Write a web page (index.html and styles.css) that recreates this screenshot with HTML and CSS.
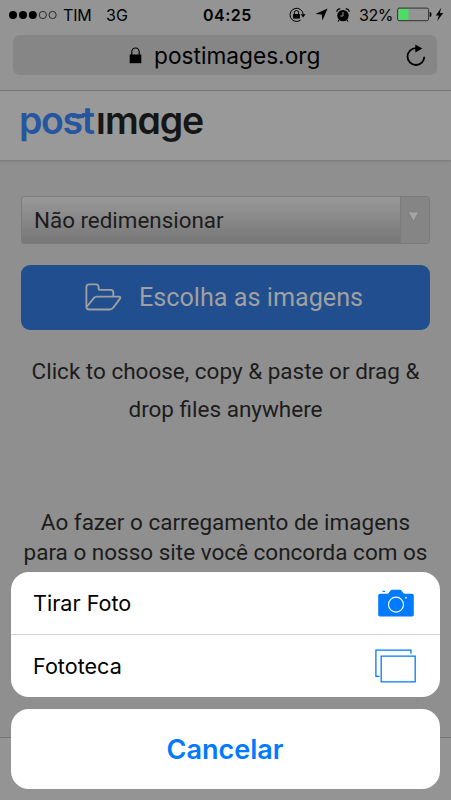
FILE: index.html
```html
<!DOCTYPE html>
<html lang="pt-BR">
<head>
<meta charset="utf-8">
<title>postimages.org</title>
<link rel="stylesheet" href="styles.css">
</head>
<body>
<div class="phone">
  <header class="browser">
    <div class="status">
      <svg class="signal" width="48" height="10" viewBox="0 0 48 10"><circle cx="4" cy="5" r="4"/><circle cx="14" cy="5" r="4"/><circle cx="23.8" cy="5" r="4"/><g fill="none" stroke="#111" stroke-width=".8"><circle cx="33.8" cy="5" r="3.6"/><circle cx="43.6" cy="5" r="3.6"/></g></svg>
      <span class="carrier">TIM</span>
      <span class="network">3G</span>
      <span class="clock">04:25</span>
      <svg class="rotation" width="17" height="16" viewBox="0 0 17 16"><path d="M11.5 13.2A6.6 6.6 0 1 1 14.2 7.5" fill="none" stroke="#000" stroke-width="1"/><path d="M11.6 7.2h5l-2.5 3.3z"/><path d="M4.1 7h6.8v4.6H4.1z"/><path d="M5.4 7.3V5.6a2.1 2.1 0 0 1 4.2 0v1.7" fill="none" stroke="#000" stroke-width="1"/></svg>
      <svg class="location" width="13" height="13" viewBox="0 0 13 13"><path d="M12.6.4L7.4 12.6 6.8 6.6.4 6z"/></svg>
      <svg class="alarm" width="14" height="14" viewBox="0 0 14 14"><circle cx="7" cy="7.6" r="5.7"/><path d="M.8 3.7A3 3 0 0 1 4.3.9M9.7.9a3 3 0 0 1 3.5 2.8" fill="none" stroke="#000" stroke-width="1.3"/><path d="M3 12l-1 1.5M11 12l1 1.5" stroke="#000" stroke-width="1.2"/><path d="M7 4v4H4.2" fill="none" stroke="#949494" stroke-width="1"/></svg>
      <span class="percent">32%</span>
      <svg class="battery" width="47" height="15" viewBox="0 0 47 15"><rect x=".6" y="1.1" width="31" height="12.6" rx="1.6" fill="none" stroke="#333" stroke-width="1"/><path d="M1.5 2h10v10.8h-10z" fill="#4bdc64"/><path d="M32.7 5c2.4 0 2.4 5 0 5z"/><path d="M44.3.8l-5.5 7.6h3.1L40.2 14l6-8h-3.4z"/></svg>
    </div>
    <div class="address">
      <svg class="lock" width="13" height="17" viewBox="0 0 13 17"><path d="M.7 7.5h11.6v8.7H.7z"/><path d="M2.8 8V4.7a3.7 3.7 0 0 1 7.4 0V8" fill="none" stroke="#000" stroke-width="1.2"/></svg>
      <span class="url">postimages.org</span>
      <svg class="reload" width="20" height="23" viewBox="0 0 20 23"><path d="M10 4.2A8.4 8.4 0 1 0 18.3 12.7" fill="none" stroke="#000" stroke-width="1.8"/><path d="M9.3 .5v8l7-4z"/></svg>
    </div>
  </header>
  <div class="brandbar"><div class="logo" aria-label="postimage"><span class="post">post</span><span class="stem">i</span><span class="mage">mage</span></div></div>
  <main class="content">
    <div class="select"><span class="value">Não redimensionar</span><span class="arrow"><svg width="11" height="10" viewBox="0 0 11 10"><path d="M.5.5h10l-5 9z" fill="#a5a5a5"/><path d="M.5.5l5 9 5-9" fill="none" stroke="#777" stroke-width=".7"/></svg></span></div>
    <div class="upload">
      <svg width="37" height="28" viewBox="0 0 37 28" fill="none" stroke="#a0a0a0" stroke-width="1.8" stroke-linejoin="round"><path d="M1.4 24V4q0-2.7 2.7-2.7h7q2.5 0 2.5 2.700v1.800q0 1 1 1h11.200q2.500 0 2.500 2.700v4.300"/><path d="M2 23.500l7-8.600q1-1.200 2.700-1.200h21.900q2.800 0 1.200 2.200l-6.500 8.700q-1.300 1.900-3.500 1.900H4.300Q1.400 26.500 1.400 23.500"/></svg>
      <span class="uploadtext">Escolha as imagens</span>
    </div>
    <p class="hint">Click to choose, copy &amp; paste or drag &amp;<br>drop files anywhere</p>
    <p class="terms">Ao fazer o carregamento de imagens<br>para o nosso site você concorda com os</p>
  </main>
  <div class="toolbar"></div>
  <div class="sheet">
    <div class="options">
      <div class="option"><span class="take">Tirar Foto</span>
        <svg class="camera" width="36" height="28" viewBox="0 0 36 28"><path d="M2 4.8h7.3q1 0 1.500-.8l1.300-2Q13 .7 14.300.7h7.400q1.300 0 2.100 1.300l1.400 2q.5.8 1.500.8H34q1.800 0 1.800 1.800v19.200q0 1.800-1.800 1.800H2q-1.800 0-1.800-1.800V6.600Q.2 4.800 2 4.800z" fill="#007aff"/><path d="M4.600 2.300h2.600" stroke="#007aff" stroke-width="1.300"/><circle cx="18" cy="15.600" r="7.500" fill="none" stroke="#fff" stroke-width="1.100"/><circle cx="28" cy="8.700" r=".9" fill="#fff"/></svg>
      </div>
      <div class="option"><span class="library">Fototeca</span>
        <svg class="stack" width="41" height="34" viewBox="0 0 41 34" fill="none" stroke="#007aff" stroke-width="1.300"><path d="M4.500 27.300H.9V1.200h35v3.600"/><path d="M6.200 7.200h34v25.600h-34z"/></svg>
      </div>
    </div>
    <div class="cancel"><span class="cancel-label">Cancelar</span></div>
  </div>
</div>
</body>
</html>
```
FILE: styles.css
```css
* { box-sizing: border-box; }
body { margin: 0; font-family: Roboto, sans-serif; color: #1c1c1c; }
svg { display: block; flex: none; }
span { white-space: nowrap; }
.phone { position: relative; width: 451px; height: 800px; overflow: hidden; background: #8f8f8f; display: flex; flex-direction: column; }
.browser { height: 91px; flex: none; background: #949494; border-bottom: 1px solid #777; font-family: Inter, sans-serif; color: #000; }
.status { height: 35px; display: flex; align-items: center; padding: 0 0 6px 9px; font-size: 16px; }
.carrier { margin-left: 6px; width: 29px; letter-spacing: -.2px; }
.network { margin-left: 14px; width: 24px; letter-spacing: .2px; }
.clock { margin-left: 73px; width: 50px; font-weight: 600; letter-spacing: .5px; }
.rotation { margin-left: 36px; }
.location { margin-left: 9px; }
.alarm { margin-left: 8px; }
.percent { margin-left: 9px; width: 34px; letter-spacing: -.5px; }
.battery { margin-left: 4px; }
.address { height: 40px; width: 424px; margin-left: 13px; border-radius: 7px; background: #868686; display: flex; align-items: center; }
.lock { margin-left: 116px; }
.url { margin-left: 12px; width: 168px; font-size: 22.7px; }
.reload { margin-left: 84px; }
.brandbar { height: 69px; flex: none; background: #999; box-shadow: 0 1px 2px #777; padding: 8px 0 0 19px; }
.logo { display: flex; font: 600 37.5px/44px Inter, sans-serif; font-feature-settings: "cv11"; color: #161616; }
.post { position: relative; color: #25569f; letter-spacing: -1.4px; width: 77px; }
.post::after { content: ""; position: absolute; left: 53px; top: 15px; width: 12px; height: 4px; background: #25569f; }
.stem { clip-path: inset(14px 0 0 0); width: 9px; }
.mage { letter-spacing: -1.2px; }
.content { display: flex; flex-direction: column; padding: 36px 21px 0; }
.select { height: 48px; border: 1px solid #7b7b7b; border-radius: 3px; background: linear-gradient(#989898, #777); display: flex; align-items: center; padding: 0 0 1px 12px; }
.value { font-size: 22.4px; flex: 1; }
.arrow { width: 29px; height: 46px; margin-bottom: -1px; background: #858585; border-left: 1px solid #7b7b7b; display: flex; justify-content: center; padding-top: 15px; padding-right: 3px; }
.upload { height: 65px; margin-top: 21px; border-radius: 9px; background: #214e8e; display: flex; align-items: center; padding: 0 0 1px 64px; color: #a0a0a0; }
.uploadtext { font-size: 25.2px; margin-left: 17px; }
.hint, .terms { margin: 0; text-align: center; font-size: 22.5px; }
.hint { margin-top: 22px; line-height: 38px; }
.terms { margin-top: 79px; line-height: 30px; }
.toolbar { position: absolute; left: 0; right: 0; bottom: 0; height: 63px; background: #949494; border-top: 1px solid #747474; }
.sheet { position: absolute; left: 11px; right: 11px; bottom: 11px; font-family: Inter, sans-serif; color: #000; width: 429px; }
.options, .cancel { background: #fff; border-radius: 18px; }
.options { height: 125px; overflow: hidden; }
.option { height: 62px; display: flex; align-items: center; justify-content: space-between; padding: 0 26px 1px 22px; font-size: 21.6px; }
.option + .option { height: 63px; border-top: 1px solid #d2d2d2; padding-right: 24px; }
.cancel { height: 80px; margin-top: 12px; display: flex; align-items: center; justify-content: center; color: #007aff; font-size: 27px; font-weight: 600; padding-right: 1px; }
```
